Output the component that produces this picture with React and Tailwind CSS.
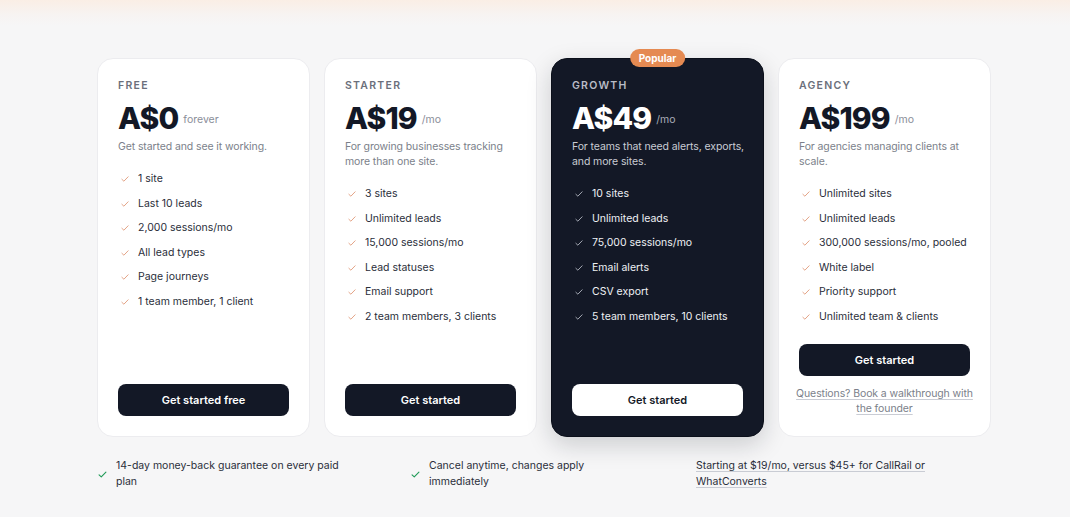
import React from "react"

const plans = [
  {
    name: "FREE",
    price: "A$0",
    unit: "forever",
    desc: "Get started and see it working.",
    features: ["1 site", "Last 10 leads", "2,000 sessions/mo", "All lead types", "Page journeys", "1 team member, 1 client"],
    cta: "Get started free",
  },
  {
    name: "STARTER",
    price: "A$19",
    unit: "/mo",
    desc: "For growing businesses tracking more than one site.",
    features: ["3 sites", "Unlimited leads", "15,000 sessions/mo", "Lead statuses", "Email support", "2 team members, 3 clients"],
    cta: "Get started",
  },
  {
    name: "GROWTH",
    price: "A$49",
    unit: "/mo",
    desc: "For teams that need alerts, exports, and more sites.",
    features: ["10 sites", "Unlimited leads", "75,000 sessions/mo", "Email alerts", "CSV export", "5 team members, 10 clients"],
    cta: "Get started",
    dark: true,
  },
  {
    name: "AGENCY",
    price: "A$199",
    unit: "/mo",
    desc: "For agencies managing clients at scale.",
    features: ["Unlimited sites", "Unlimited leads", "300,000 sessions/mo, pooled", "White label", "Priority support", "Unlimited team & clients"],
    cta: "Get started",
    note: true,
  },
]

function Check({ className }) {
  return (
    <svg viewBox="0 0 16 16" className={className} fill="none" stroke="currentColor" strokeWidth="1.6" strokeLinecap="round" strokeLinejoin="round">
      <path d="M3 8.5l3.2 3L13 4.5" />
    </svg>
  )
}

function PlanCard({ plan }) {
  const dark = plan.dark
  return (
    <div
      className={
        "relative flex flex-col rounded-2xl px-5 pt-[19px] pb-5 " +
        (dark
          ? "bg-[#131826] border border-[#0b0f1a] shadow-[0_8px_24px_rgba(15,20,35,0.18)]"
          : "bg-white border border-[#ececef]")
      }
    >
      {dark && (
        <span className="absolute -top-[10px] left-1/2 -translate-x-1/2 rounded-full bg-[#e58a52] px-[9px] py-[2px] text-[10px] font-bold leading-[14px] text-white">
          Popular
        </span>
      )}
      <p className={"text-[10.5px] font-semibold tracking-[0.12em] leading-4 " + (dark ? "text-[#b9bcc6]" : "text-[#6b6f7b]")}>
        {plan.name}
      </p>
      <div className="mt-[6px] flex items-center gap-[5px]">
        <span className={"text-[30px] font-extrabold leading-9 tracking-[-0.03em] " + (dark ? "text-white" : "text-[#131826]")}>
          {plan.price}
        </span>
        <span className={"pt-[4px] text-[10.5px] " + (dark ? "text-[#a9adb8]" : "text-[#8a8e99]")}>{plan.unit}</span>
      </div>
      <p className={"mt-[3px] -mr-2 text-[10.5px] leading-[15px] tracking-[-0.01em] " + (dark ? "text-[#c9ccd4]" : "text-[#7b7f8a]")}>{plan.desc}</p>
      <ul className="mt-[17px] flex flex-col gap-[8.5px]">
        {plan.features.map(f => (
          <li key={f} className="flex items-center gap-[8px] text-[10.5px] leading-4 whitespace-nowrap">
            <Check className={"ml-[2px] h-[10px] w-[10px] shrink-0 " + (dark ? "text-[#a3a7b2]" : "text-[#e4a487]")} />
            <span className={dark ? "text-[#eef0f4]" : "text-[#2a2e3a]"}>{f}</span>
          </li>
        ))}
      </ul>
      <div className="mt-auto">
        <button
          className={
            "h-[32px] w-full rounded-lg text-[11px] font-semibold " +
            (dark ? "bg-white text-[#131826]" : "bg-[#131826] text-white")
          }
        >
          {plan.cta}
        </button>
        {plan.note && (
          <p className="mt-[10px] -mx-2 text-center text-[10.5px] leading-[15px] tracking-[-0.01em] text-[#7b7f8a]">
            <span className="underline decoration-[#c9ccd4] underline-offset-2">Questions? Book a walkthrough with the founder</span>
          </p>
        )}
      </div>
    </div>
  )
}

export default function App() {
  return (
    <div
      className="min-h-[517px] bg-[linear-gradient(180deg,#faeee5_0px,#f7f3f1_14px,#f6f6f7_26px,#f6f6f7_100%)] pt-[58px] pb-8"
      style={{ fontFamily: "Inter, 'Noto Sans', sans-serif" }}
    >
      <div className="ml-[97px] w-[894px]">
        <div className="grid grid-cols-4 gap-[14px] h-[379px]">
          {plans.map(p => (
            <PlanCard key={p.name} plan={p} />
          ))}
        </div>
        <div className="mt-[21px] grid grid-cols-[313px_286px_1fr] text-[10.5px] leading-4 text-[#2a2e3a]">
          <div className="flex items-center gap-2">
            <Check className="h-[11px] w-[11px] shrink-0 text-[#1f9a57]" />
            <p className="w-[240px]">14-day money-back guarantee on every paid plan</p>
          </div>
          <div className="flex items-center gap-2">
            <Check className="h-[11px] w-[11px] shrink-0 text-[#1f9a57]" />
            <p className="w-[165px]">Cancel anytime, changes apply immediately</p>
          </div>
          <div className="flex items-center">
            <p className="w-[240px]">
              <span className="underline decoration-[#c9ccd4] underline-offset-2">Starting at $19/mo, versus $45+ for CallRail or WhatConverts</span>
            </p>
          </div>
        </div>
      </div>
    </div>
  )
}
